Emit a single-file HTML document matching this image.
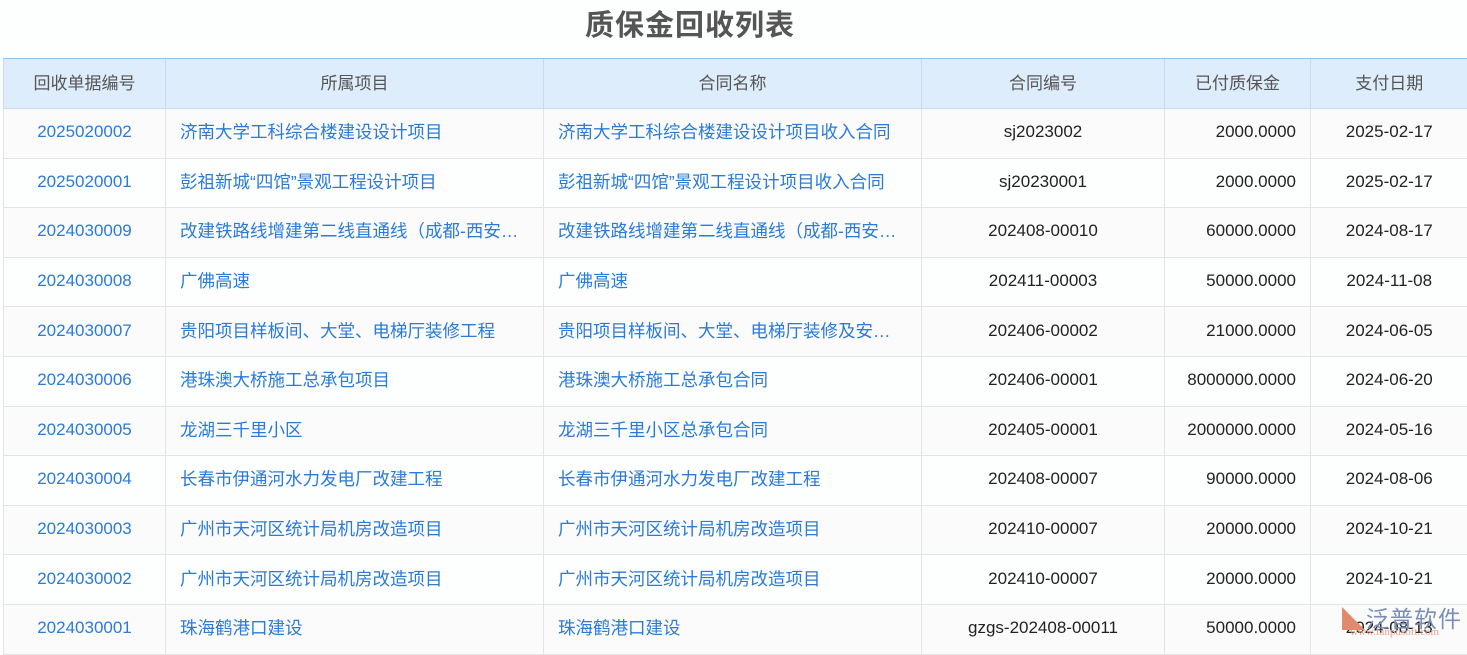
<!DOCTYPE html>
<html><head><meta charset="utf-8"><style>
body{margin:0;width:1467px;height:648px;overflow:hidden;background:#fdfefe;font-family:"Liberation Sans","Noto Sans CJK SC",sans-serif;}
h1{position:absolute;top:0;left:0;width:1380px;margin:0;height:58px;line-height:52px;text-align:center;font-size:29px;font-weight:bold;color:#555;letter-spacing:1px}
table{position:absolute;top:58px;left:3px;width:1464px;border-collapse:collapse;table-layout:fixed;font-size:17px}
th{height:50px;box-sizing:border-box;padding:0 0 3px;background:#deedfb;color:#555;font-weight:normal;font-family:"Noto Sans CJK SC",sans-serif;line-height:20px;border-top:1px solid #8ec2ef;border-bottom:1px solid #c6dcf0;border-left:1px solid #c9dcee}
td{height:49.6px;padding:0 14px 2px;line-height:20px;border-bottom:1px solid #e4e4e4;border-left:1px solid #e4e4e4;color:#222;white-space:nowrap;overflow:hidden;text-overflow:ellipsis;box-sizing:border-box}
tr:nth-child(even) td{background:#fbfbfc}
td.a{color:#2a7bd8;text-align:center;padding:0 0 2px}
td.l{color:#2a7bd8;font-size:17.5px}
td.c{text-align:center}
td.r{text-align:right}
.logo{position:absolute;left:1342px;top:600px;font-size:23px;color:#7a8fb5;letter-spacing:1px}
.logo small{position:absolute;left:8px;top:26px;font-size:11px;color:#e5a28d;font-family:"Liberation Serif",serif;letter-spacing:0}
</style></head><body>
<h1>质保金回收列表</h1>
<table>
<colgroup><col style="width:162px"><col style="width:378px"><col style="width:378px"><col style="width:243px"><col style="width:146px"><col style="width:157px"></colgroup>
<tr><th>回收单据编号</th><th>所属项目</th><th>合同名称</th><th>合同编号</th><th>已付质保金</th><th>支付日期</th></tr>
<tr><td class="a">2025020002</td><td class="l">济南大学工科综合楼建设设计项目</td><td class="l">济南大学工科综合楼建设设计项目收入合同</td><td class="c">sj2023002</td><td class="r">2000.0000</td><td class="c">2025-02-17</td></tr>
<tr><td class="a">2025020001</td><td class="l">彭祖新城“四馆”景观工程设计项目</td><td class="l">彭祖新城“四馆”景观工程设计项目收入合同</td><td class="c">sj20230001</td><td class="r">2000.0000</td><td class="c">2025-02-17</td></tr>
<tr><td class="a">2024030009</td><td class="l">改建铁路线增建第二线直通线（成都-西安铁路）</td><td class="l">改建铁路线增建第二线直通线（成都-西安铁路）</td><td class="c">202408-00010</td><td class="r">60000.0000</td><td class="c">2024-08-17</td></tr>
<tr><td class="a">2024030008</td><td class="l">广佛高速</td><td class="l">广佛高速</td><td class="c">202411-00003</td><td class="r">50000.0000</td><td class="c">2024-11-08</td></tr>
<tr><td class="a">2024030007</td><td class="l">贵阳项目样板间、大堂、电梯厅装修工程</td><td class="l">贵阳项目样板间、大堂、电梯厅装修及安装工程</td><td class="c">202406-00002</td><td class="r">21000.0000</td><td class="c">2024-06-05</td></tr>
<tr><td class="a">2024030006</td><td class="l">港珠澳大桥施工总承包项目</td><td class="l">港珠澳大桥施工总承包合同</td><td class="c">202406-00001</td><td class="r">8000000.0000</td><td class="c">2024-06-20</td></tr>
<tr><td class="a">2024030005</td><td class="l">龙湖三千里小区</td><td class="l">龙湖三千里小区总承包合同</td><td class="c">202405-00001</td><td class="r">2000000.0000</td><td class="c">2024-05-16</td></tr>
<tr><td class="a">2024030004</td><td class="l">长春市伊通河水力发电厂改建工程</td><td class="l">长春市伊通河水力发电厂改建工程</td><td class="c">202408-00007</td><td class="r">90000.0000</td><td class="c">2024-08-06</td></tr>
<tr><td class="a">2024030003</td><td class="l">广州市天河区统计局机房改造项目</td><td class="l">广州市天河区统计局机房改造项目</td><td class="c">202410-00007</td><td class="r">20000.0000</td><td class="c">2024-10-21</td></tr>
<tr><td class="a">2024030002</td><td class="l">广州市天河区统计局机房改造项目</td><td class="l">广州市天河区统计局机房改造项目</td><td class="c">202410-00007</td><td class="r">20000.0000</td><td class="c">2024-10-21</td></tr>
<tr><td class="a">2024030001</td><td class="l">珠海鹤港口建设</td><td class="l">珠海鹤港口建设</td><td class="c">gzgs-202408-00011</td><td class="r">50000.0000</td><td class="c">2024-08-13</td></tr>
</table>
<div class="logo"><span style="color:#e08a70">◣</span>泛普软件<small>www.fanpusoft.com</small></div>
</body></html>
